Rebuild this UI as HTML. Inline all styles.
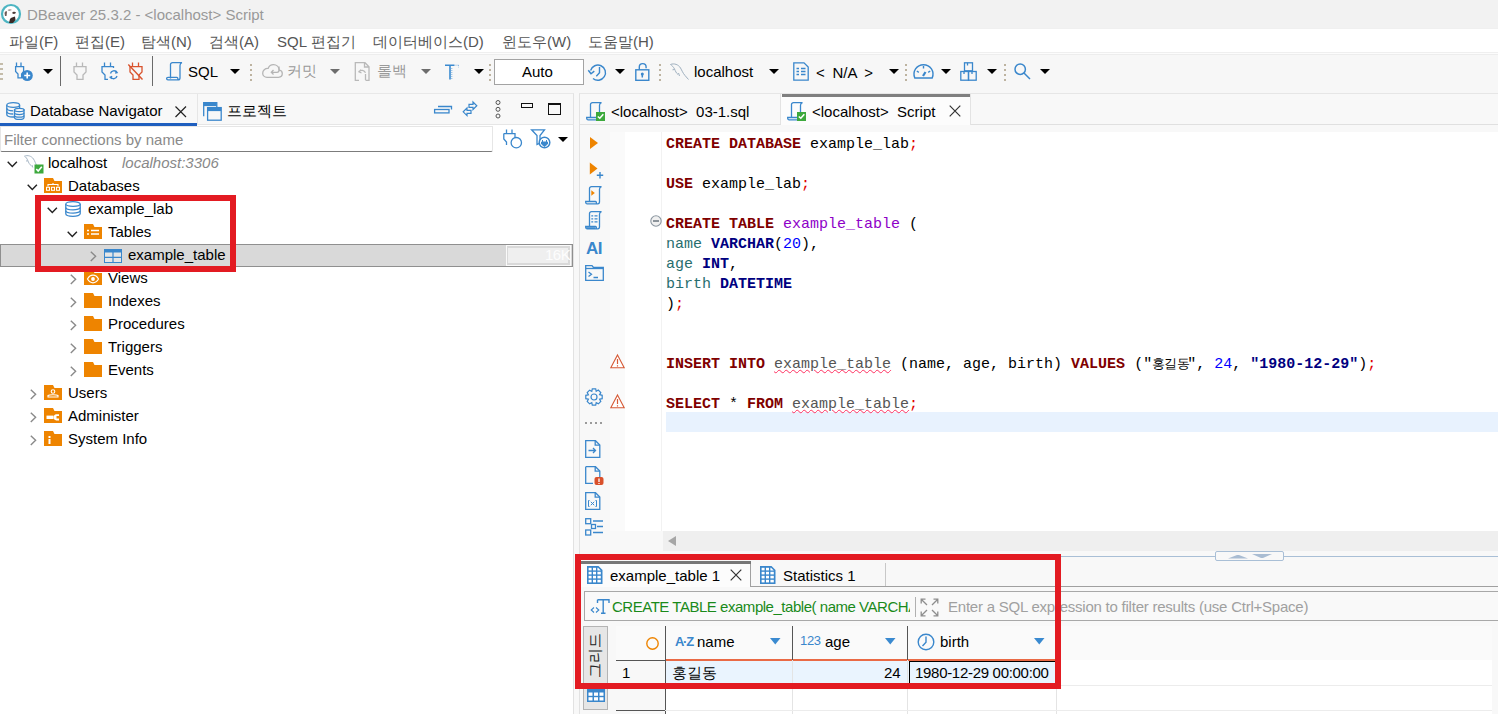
<!DOCTYPE html>
<html><head><meta charset="utf-8">
<style>
*{box-sizing:border-box;margin:0;padding:0}
html,body{width:1498px;height:714px;overflow:hidden;background:#fff}
body{position:relative;font-family:"Liberation Sans",sans-serif;font-size:15px;color:#000}
.a{position:absolute}
.t{position:absolute;white-space:pre;line-height:20px;font-size:15px}
.m{position:absolute;white-space:pre;line-height:20px;font-family:"Liberation Mono",monospace;font-size:15px}
svg{position:absolute;overflow:visible}
.kw{color:#7f0000;font-weight:bold}
.kb{color:#000080;font-weight:bold}
.sm{color:#e00000}
.id{color:#286e6e}
.num{color:#0000ff}
.tb{color:#8e00c8}
.ul{color:#555;text-decoration:underline wavy #ff3060;text-decoration-thickness:1px;text-underline-offset:1px}
.arr{position:absolute;width:0;height:0;border-left:5px solid transparent;border-right:5px solid transparent;border-top:5px solid #000}
.dsep{position:absolute;width:2px;height:26px;background:repeating-linear-gradient(#bdb3a0 0 2px,transparent 2px 5px)}
</style></head><body>

<!-- Title bar -->
<div class="a" style="left:0;top:0;width:1498px;height:29px;background:#f2f2f2;border-bottom:1px solid #f0f0f0"></div>
<div class="t" style="left:27px;top:5px;color:#999">DBeaver 25.3.2 - &lt;localhost&gt; Script</div>

<!-- Menu bar -->
<div class="a" style="left:0;top:29px;width:1498px;height:23px;background:#fff"></div>
<div class="t" style="left:9px;top:32px;color:#555">파일(F)</div>
<div class="t" style="left:75px;top:32px;color:#555">편집(E)</div>
<div class="t" style="left:141px;top:32px;color:#555">탐색(N)</div>
<div class="t" style="left:209px;top:32px;color:#555">검색(A)</div>
<div class="t" style="left:277px;top:32px;color:#555">SQL 편집기</div>
<div class="t" style="left:373px;top:32px;color:#555">데이터베이스(D)</div>
<div class="t" style="left:502px;top:32px;color:#555">윈도우(W)</div>
<div class="t" style="left:588px;top:32px;color:#555">도움말(H)</div>

<!-- Toolbar -->
<div class="a" style="left:0;top:52px;width:1498px;height:42px;background:#f7f7f7;border-bottom:1px solid #e3e3e3"></div><div class="a" style="left:0;top:52px;width:1498px;height:1px;background:#efefef"></div><div class="a" style="left:0;top:53px;width:1498px;height:1px;background:#fcfcfc"></div><div class="a" style="left:0;top:54px;width:1498px;height:1px;background:#ededed"></div>


<!-- ===== ICONS ===== -->
<!-- DBeaver logo -->
<svg style="left:0;top:3px" width="22" height="22" viewBox="0 0 22 22">
<circle cx="11" cy="11" r="9" fill="#fff" stroke="#4db5c2" stroke-width="2.2"/>
<path d="M9 20L10 16C11 14.5 13 14 15 13.5L15.5 17L13 20Z" fill="#3a2a26"/>
<path d="M12 10C13 8.5 15 8.5 16 9.5C15.5 11 13.5 11.5 12 10Z" fill="#4a3a36"/>
<path d="M4.5 10C5 8.5 6 8 7 8.5L6.5 13L5 13Z" fill="#6b5b57"/>
<path d="M7.5 7C9 6 11 6 12 7L9 8Z" fill="#9a8f8c"/>
</svg>

<!-- Toolbar -->
<div class="a" style="left:0;top:63px;width:3px;height:20px;background:repeating-linear-gradient(#c4bcaa 0 2px,transparent 2px 5px)"></div>
<svg style="left:15px;top:62px" width="20" height="20" viewBox="0 0 20 20" fill="none" stroke="#3a87cc" stroke-width="1.3">
<path d="M1.5 0.5V4.5M6 0.5V4.5M0.6 4.6H8.6V9.5L6.6 12V15.8H3V12L0.6 9.5Z"/>
<circle cx="12.2" cy="13.5" r="5.6" fill="#3a87cc" stroke="none"/>
<path d="M12.2 10.5V16.5M9.2 13.5H15.2" stroke="#fff" stroke-width="1.6"/>
</svg>
<div class="arr" style="left:43px;top:69px"></div>
<div class="a" style="left:60px;top:56px;width:1px;height:30px;background:#6a6a6a"></div>
<svg style="left:73px;top:62px" width="14" height="18" viewBox="0 0 14 18" fill="none" stroke="#b9b9b9" stroke-width="1.3">
<path d="M3.5 0.5V4.5M9.5 0.5V4.5M1 4.6H13V10L10 13V17.3H4V13L1 10Z"/>
</svg>
<svg style="left:101px;top:62px" width="17" height="18" viewBox="0 0 17 18" fill="none" stroke="#3a87cc" stroke-width="1.3">
<path d="M3.5 0.5V4.5M9.5 0.5V4.5M12.5 6V4.6H1V10L4 13V17.3H7"/>
<path d="M9.5 11.5a3.5 3.5 0 0 1 6.3-1.2M16 14a3.5 3.5 0 0 1-6.3 1.2"/>
<path d="M14.5 8.8l1.6 1.8l-2 .6M10.8 16.8l-1.6-1.6l2-.8"/>
</svg>
<svg style="left:128px;top:62px" width="15" height="18" viewBox="0 0 15 18" fill="none" stroke="#d9532d" stroke-width="1.3">
<path d="M4.5 0.5V4.5M10.5 0.5V4.5M2 4.6H14V10L11 13V17.3H5V13L2 10Z"/>
<path d="M0.3 2.5L14.5 17.5" stroke-width="1.4"/>
</svg>
<div class="a" style="left:152px;top:56px;width:1px;height:30px;background:#6a6a6a"></div>
<svg style="left:166px;top:62px" width="17" height="19" viewBox="0 0 17 19" fill="none" stroke="#3a87cc" stroke-width="1.3">
<path d="M4.5 16.5V2.5C4.5 1.3 5.3 0.7 6.5 0.7H16C14.8 1 14 2 14 3.5V16C14 17.3 13.3 17.9 12 17.9H2C1 17.9 0.6 17.2 0.6 16.6C0.6 16 1 15.4 2 15.4H10.8C11.8 15.4 12 16 12 17.8"/>
</svg>
<div class="t" style="left:188px;top:62px">SQL</div>
<div class="arr" style="left:230px;top:69px"></div>
<div class="dsep" style="left:250px;top:64px;height:18px"></div>
<svg style="left:262px;top:64px" width="21" height="14" viewBox="0 0 21 14" fill="none" stroke="#b5b5b5" stroke-width="1.3">
<path d="M5 13.3H16.5C18.8 13.3 20.3 11.7 20.3 9.6C20.3 7.8 19 6.4 17.3 6.2C17 3 14.6 0.7 11.5 0.7C9 0.7 7 2.2 6.2 4.4C3 4.2 0.7 6.5 0.7 9.2C0.7 11.6 2.6 13.3 5 13.3Z"/>
<path d="M17 2.5V6.5C17 7.5 16.5 8.3 15 8.3H9.5M11.5 6L9.3 8.3L11.5 10.5"/>
</svg>
<div class="t" style="left:287px;top:61px;color:#9a9a9a">커밋</div>
<div class="arr" style="left:330px;top:69px;border-top-color:#6d6d6d"></div>
<svg style="left:354px;top:62px" width="16" height="19" viewBox="0 0 16 19" fill="none" stroke="#b9b9b9" stroke-width="1.3">
<path d="M5 18.3H1.3V0.7H11L15 4.7V18.3H11.5M10.5 0.7V5H15M5 9.5a4 4 0 0 1 6.5 1.2M7 7.8L5 9.8L7.5 11"/>
<path d="M11.5 12V18"/>
</svg>
<div class="t" style="left:377px;top:61px;color:#9a9a9a">롤백</div>
<div class="arr" style="left:421px;top:69px;border-top-color:#6d6d6d"></div>
<svg style="left:445px;top:64px" width="15" height="16" viewBox="0 0 15 16">
<path d="M0 1.2H9.5M5 1.2V15.5" stroke="#3a8ad0" stroke-width="1.6" fill="none"/>
<path d="M10.5 1.2H14M13.5 1.2V3.5M6.8 4V15.5" stroke="#7fb2de" stroke-width="1" stroke-dasharray="1 1" fill="none"/>
</svg>
<div class="arr" style="left:474px;top:69px"></div>
<div class="dsep" style="left:489px;top:64px;height:18px"></div>
<div class="a" style="left:494px;top:59px;width:90px;height:26px;background:#fff;border:1px solid #a3a3a3"></div>
<div class="t" style="left:522px;top:62px">Auto</div>
<svg style="left:588px;top:63px" width="20" height="19" viewBox="0 0 20 19" fill="none" stroke="#3a87cc" stroke-width="1.4">
<path d="M2.6 7.5A7.6 7.6 0 1 1 5 15.5"/>
<path d="M0.3 7.3L3 10.8L6.3 8.2" stroke-width="1.5"/>
<path d="M11.5 4V9.8L8.3 13.2"/>
</svg>
<div class="arr" style="left:615px;top:69px"></div>
<svg style="left:635px;top:63px" width="15" height="18" viewBox="0 0 15 18" fill="none" stroke="#3a87cc" stroke-width="1.4">
<path d="M4.3 6.8V4A3.4 3.4 0 0 1 11.1 4V5.2"/>
<rect x="0.8" y="6.8" width="13" height="10.5"/>
<circle cx="7.3" cy="11" r="1.5" fill="#3a87cc" stroke="none"/><path d="M7.3 11V14.5" stroke-width="1.5"/>
</svg>
<div class="dsep" style="left:659px;top:64px;height:18px"></div>
<svg style="left:670px;top:63px" width="19" height="17" viewBox="0 0 19 17" fill="none" stroke="#9fb0bf" stroke-width="1">
<path d="M0.5 1.5C4 0 8.5 1.5 10.5 5C12 7.5 12.8 10 15 12.5L18.5 16.5M0.5 1.5C2 2.5 3.5 4 4.5 6C5.5 8 6 10 8 11.5M4.5 6.5L2.5 6.8M8.5 10L9.5 13"/>
</svg>
<div class="t" style="left:694px;top:62px">localhost</div>
<div class="arr" style="left:769px;top:69px"></div>
<svg style="left:793px;top:62px" width="16" height="19" viewBox="0 0 16 19" fill="none" stroke="#3a87cc" stroke-width="1.3">
<path d="M0.8 0.8H11L15.2 5V18.2H0.8Z"/>
<path d="M3.5 6.5H6M3.5 9.5H6M3.5 12.5H6M8 6.5H12.5M8 9.5H12.5M8 12.5H12.5" stroke-width="1.6"/>
</svg>
<div class="t" style="left:816px;top:63px;word-spacing:3.5px">&lt; N/A &gt;</div>
<div class="arr" style="left:889px;top:69px"></div>
<div class="dsep" style="left:905px;top:64px;height:18px"></div>
<svg style="left:913px;top:64px" width="21" height="15" viewBox="0 0 21 15" fill="none" stroke="#3a87cc" stroke-width="1.4">
<path d="M1.8 14A9.5 9.5 0 1 1 19.2 14Z"/>
<path d="M10.5 2V4.5M3.8 7L5.8 8.3M17.2 7L15.2 8.3"/>
<path d="M12.5 8L10 12" stroke-width="2.2"/>
</svg>
<div class="arr" style="left:941px;top:69px"></div>
<svg style="left:960px;top:62px" width="17" height="19" viewBox="0 0 17 19" fill="none" stroke="#3a87cc" stroke-width="1.3">
<rect x="4.5" y="0.8" width="8" height="8"/><rect x="0.8" y="9.5" width="7.7" height="8.7"/><rect x="8.5" y="9.5" width="7.7" height="8.7"/>
<path d="M7.5 0.8V3.5M4 9.5V12M12 9.5V12"/>
</svg>
<div class="arr" style="left:987px;top:69px"></div>
<div class="dsep" style="left:1004px;top:64px;height:18px"></div>
<svg style="left:1014px;top:63px" width="17" height="17" viewBox="0 0 17 17" fill="none" stroke="#3a87cc" stroke-width="1.5">
<circle cx="6.2" cy="6.2" r="5.2"/><path d="M10 10L16 16"/>
</svg>
<div class="arr" style="left:1040px;top:69px"></div>

<!-- Left panel -->
<div class="a" style="left:0;top:93px;width:574px;height:621px;background:#fff;border-right:1px solid #e2e2e2"></div>
<div class="a" style="left:0;top:93px;width:574px;height:32px;background:#f8f8f8;border-top:1px solid #e8e8e8;border-bottom:1px solid #e6e6e6;border-right:1px solid #e2e2e2"></div>
<div class="a" style="left:0;top:123px;width:197px;height:3px;background:#1f5fbf"></div>
<div class="a" style="left:197px;top:94px;width:1px;height:30px;background:#e6e6e6"></div>
<div class="t" style="left:30px;top:101px">Database Navigator</div>
<div class="t" style="left:227px;top:101px">프로젝트</div>

<!-- gap -->
<div class="a" style="left:574px;top:93px;width:5px;height:621px;background:#f8f8f8"></div>

<!-- Right panel -->
<div class="a" style="left:579px;top:93px;width:919px;height:621px;background:#f8f8f8;border-left:1px solid #e2e2e2;border-top:1px solid #e6e6e6"></div>


<!-- Filter connections -->
<div class="a" style="left:0;top:126px;width:493px;height:26px;background:#fff;border:1px solid #e6e6e6;border-bottom:1px solid #7c7c7c;border-radius:0 0 2px 2px"></div>
<div class="t" style="left:4px;top:130px;color:#8a8a8a">Filter connections by name</div>

<!-- Tree -->
<div class="a" style="left:0;top:244px;width:573px;height:23px;background:#d9d9d9;border:1px solid #8f8f8f"></div>
<div class="a" style="left:506px;top:245px;width:65px;height:21px;background:#fafafa"></div><div class="a" style="left:507px;top:246px;width:63px;height:19px;background:#efefef;border:2px solid #d9d9d9;border-left-width:1px"></div>
<div class="t" style="left:545px;top:245px;color:#fdfdfd;font-size:15px;letter-spacing:-0.5px">16K</div>
<div class="t" style="left:48px;top:153px">localhost</div>
<div class="t" style="left:122px;top:153px;color:#888;font-style:italic">localhost:3306</div>
<div class="t" style="left:68px;top:176px">Databases</div>
<div class="t" style="left:88px;top:199px">example_lab</div>
<div class="t" style="left:108px;top:222px">Tables</div>
<div class="t" style="left:128px;top:245px">example_table</div>
<div class="t" style="left:108px;top:268px">Views</div>
<div class="t" style="left:108px;top:291px">Indexes</div>
<div class="t" style="left:108px;top:314px">Procedures</div>
<div class="t" style="left:108px;top:337px">Triggers</div>
<div class="t" style="left:108px;top:360px">Events</div>
<div class="t" style="left:68px;top:383px">Users</div>
<div class="t" style="left:68px;top:406px">Administer</div>
<div class="t" style="left:68px;top:429px">System Info</div>

<!-- Editor tabs -->
<div class="a" style="left:580px;top:94px;width:918px;height:31px;background:#f8f8f8;border-bottom:1px solid #e0e0e0"></div>
<div class="a" style="left:780px;top:94px;width:1px;height:30px;background:#e3e3e3"></div>
<div class="a" style="left:781px;top:94px;width:190px;height:31px;background:#fcfcfc;border-right:1px solid #e3e3e3"></div>
<div class="a" style="left:782px;top:94px;width:188px;height:3px;background:#7f7f7f"></div>
<div class="t" style="left:611px;top:102px">&lt;localhost&gt;  03-1.sql</div>
<div class="t" style="left:812px;top:102px">&lt;localhost&gt;  Script</div>

<!-- Editor body -->
<div class="a" style="left:610px;top:132px;width:15px;height:399px;background:#fafafa"></div>
<div class="a" style="left:625px;top:132px;width:37px;height:399px;background:#fff"></div>
<div class="a" style="left:661px;top:132px;width:837px;height:399px;background:#fff;border-left:1px solid #f2f2f2"></div>
<div class="a" style="left:666px;top:412px;width:832px;height:20px;background:#e8f2fe"></div>
<div class="a" style="left:663px;top:531px;width:835px;height:20px;background:#efefef"></div>

<div class="m" style="left:666px;top:135px"><span class="kw">CREATE DATABASE</span> example_lab<span class="sm">;</span></div>
<div class="m" style="left:666px;top:175px"><span class="kw">USE</span> example_lab<span class="sm">;</span></div>
<div class="m" style="left:666px;top:215px"><span class="kw">CREATE TABLE</span> <span class="tb">example_table</span> (</div>
<div class="m" style="left:666px;top:235px"><span class="id">name</span> <span class="kb">VARCHAR</span>(<span class="num">20</span>),</div>
<div class="m" style="left:666px;top:255px"><span class="id">age</span> <span class="kb">INT</span>,</div>
<div class="m" style="left:666px;top:275px"><span class="id">birth</span> <span class="kb">DATETIME</span></div>
<div class="m" style="left:666px;top:295px">)<span class="sm">;</span></div>
<div class="m" style="left:666px;top:355px"><span class="kw">INSERT INTO</span> <span class="ul">example_table</span> (name, age, birth) <span class="kw">VALUES</span> ("<span style="display:inline-block;width:35px;font-size:13px;letter-spacing:-0.8px;vertical-align:top;line-height:20px">홍길동</span>", <span class="num">24</span>, <span class="kb">"1980-12-29"</span>)<span class="sm">;</span></div>
<div class="m" style="left:666px;top:395px"><span class="kw">SELECT</span> * <span class="kw">FROM</span> <span class="ul">example_table</span><span class="sm">;</span></div>


<!-- Editor tab icons -->
<svg style="left:586px;top:102px" width="20" height="20" viewBox="0 0 20 20"><path d="M4.5 15.5V2.5C4.5 1.3 5.3 0.7 6.5 0.7H15.5C14.5 1 13.5 1.8 13.5 3.2V14" fill="none" stroke="#3a87cc" stroke-width="1.3"/><path d="M0.7 15.5H10.5C11.3 15.5 11.5 16.2 11.5 17.8H2.2C1.2 17.8 0.7 17 0.7 16.3Z" fill="none" stroke="#3a87cc" stroke-width="1.3"/><rect x="10" y="10" width="9" height="9" fill="#3da93d"/><path d="M11.8 14.5L13.8 16.3L17.3 12.3" fill="none" stroke="#fff" stroke-width="1.5"/></svg>
<svg style="left:787px;top:102px" width="20" height="20" viewBox="0 0 20 20"><path d="M4.5 15.5V2.5C4.5 1.3 5.3 0.7 6.5 0.7H15.5C14.5 1 13.5 1.8 13.5 3.2V14" fill="none" stroke="#3a87cc" stroke-width="1.3"/><path d="M0.7 15.5H10.5C11.3 15.5 11.5 16.2 11.5 17.8H2.2C1.2 17.8 0.7 17 0.7 16.3Z" fill="none" stroke="#3a87cc" stroke-width="1.3"/><rect x="10" y="10" width="9" height="9" fill="#3da93d"/><path d="M11.8 14.5L13.8 16.3L17.3 12.3" fill="none" stroke="#fff" stroke-width="1.5"/></svg>
<svg style="left:949px;top:105px" width="12" height="12" viewBox="0 0 12 12"><path d="M0.7 0.7L11.3 11.3M11.3 0.7L0.7 11.3" stroke="#333" stroke-width="1.2"/></svg>

<!-- Gutter icons -->
<svg style="left:590px;top:137px" width="8" height="12" viewBox="0 0 8 12"><path d="M0 0L8 6L0 12Z" fill="#ee8400"/></svg>
<svg style="left:589px;top:162px" width="16" height="17" viewBox="0 0 16 17"><path d="M0.8 0.5L8.5 6.5L0.8 12.5Z" fill="#ee8400"/><path d="M11 10V16.5M7.8 13.3H14.2" stroke="#3a87cc" stroke-width="1.4"/></svg>
<svg style="left:585px;top:186px" width="18" height="19" viewBox="0 0 18 19"><path d="M4.5 15.5V2.5C4.5 1.3 5.3 0.7 6.5 0.7H16.5C15.5 1 14.5 1.8 14.5 3.2V15.8C14.5 17 14 17.8 12.8 17.8H2.2C1.2 17.8 0.7 17 0.7 16.3V15.5H10.5C11.3 15.5 11.5 16.2 11.5 17.8" fill="none" stroke="#3a87cc" stroke-width="1.3"/><path d="M6.3 4.2L9.8 7L6.3 9.8Z" fill="#ee8400"/></svg>
<svg style="left:585px;top:211px" width="18" height="19" viewBox="0 0 18 19"><path d="M4.5 15.5V2.5C4.5 1.3 5.3 0.7 6.5 0.7H16.5C15.5 1 14.5 1.8 14.5 3.2V15.8C14.5 17 14 17.8 12.8 17.8H2.2C1.2 17.8 0.7 17 0.7 16.3V15.5H10.5C11.3 15.5 11.5 16.2 11.5 17.8" fill="none" stroke="#3a87cc" stroke-width="1.3"/><path d="M0.7 16.2H10.5V18H2Z" fill="#3a87cc"/><path d="M6.3 4.8H8.2M9.5 4.8H12.5M6.3 7.8H8.2M9.5 7.8H12.5M6.3 10.8H8.2M9.5 10.8H12.5" stroke="#3a87cc" stroke-width="1.3"/></svg>
<div class="a" style="left:586px;top:239px;font-family:'Liberation Sans',sans-serif;font-weight:bold;font-size:17px;line-height:20px;color:#3a87cc;letter-spacing:-0.5px">AI</div>
<svg style="left:585px;top:265px" width="19" height="16" viewBox="0 0 19 16" fill="none" stroke="#3a87cc" stroke-width="1.3"><path d="M0.7 15.3V0.7H7L8.5 2.5H18.3V15.3Z"/><path d="M0.7 3.5H18.3"/><path d="M3.5 7L6.5 9.3L3.5 11.6M8.5 12.5H13"/></svg>
<svg style="left:650px;top:215px" width="12" height="12" viewBox="0 0 12 12"><circle cx="6" cy="6" r="5.2" fill="#f0f0f0" stroke="#8b96a0" stroke-width="1.1"/><path d="M3 6H9" stroke="#5f6b75" stroke-width="1.4"/></svg>
<svg style="left:610px;top:354px" width="15" height="15" viewBox="0 0 15 15"><path d="M7.5 1L14.2 13.8H0.8Z" fill="#fff" stroke="#d65a36" stroke-width="1.1"/><path d="M7.5 5V10M7.5 11.2V12.5" stroke="#d65a36" stroke-width="1.2"/></svg>
<svg style="left:610px;top:394px" width="15" height="15" viewBox="0 0 15 15"><path d="M7.5 1L14.2 13.8H0.8Z" fill="#fff" stroke="#d65a36" stroke-width="1.1"/><path d="M7.5 5V10M7.5 11.2V12.5" stroke="#d65a36" stroke-width="1.2"/></svg>
<svg style="left:585px;top:388px" width="18" height="18" viewBox="0 0 18 18"><path d="M7.3 0.8H10.7L11.2 3.3L13.3 2.1L15.8 4.6L14.6 6.7L17.2 7.3V10.7L14.6 11.2L15.8 13.4L13.4 15.8L11.2 14.6L10.7 17.2H7.3L6.8 14.6L4.6 15.8L2.2 13.4L3.4 11.2L0.8 10.7V7.3L3.4 6.8L2.2 4.6L4.6 2.2L6.8 3.4Z" fill="none" stroke="#3a87cc" stroke-width="1.2"/><circle cx="9" cy="9" r="3" fill="none" stroke="#3a87cc" stroke-width="1.2"/></svg>
<div class="a" style="left:585px;top:422px;width:19px;height:2px;background:repeating-linear-gradient(90deg,#9a9a9a 0 2px,transparent 2px 5px)"></div>
<svg style="left:585px;top:440px" width="17" height="18" viewBox="0 0 17 18" fill="none" stroke="#3a87cc" stroke-width="1.3"><path d="M0.7 0.7H10.5L14.8 5V17.3H0.7Z"/><path d="M10.2 0.7V5.2H14.8"/><path d="M3.5 10.5H10.5M8 8L10.5 10.5L8 13"/></svg>
<svg style="left:585px;top:466px" width="19" height="19" viewBox="0 0 19 19"><path d="M0.7 0.7H10.5L14.8 5V11M8 17.3H0.7V0.7" fill="none" stroke="#3a87cc" stroke-width="1.3"/><path d="M10.2 0.7V5.2H14.8" fill="none" stroke="#3a87cc" stroke-width="1.3"/><rect x="9.5" y="11" width="9" height="8" rx="2" fill="#d9502b"/><path d="M14 12.5V16M14 17V18" stroke="#fff" stroke-width="1.3"/></svg>
<svg style="left:585px;top:492px" width="17" height="18" viewBox="0 0 17 18" fill="none" stroke="#3a87cc" stroke-width="1.3"><path d="M0.7 0.7H10.5L14.8 5V17.3H0.7Z"/><path d="M10.2 0.7V5.2H14.8"/><path d="M4.5 8.5H3.5V14.5H4.5M10.5 8.5H11.5V14.5H10.5M5.8 9.8L9.2 13.2M9.2 9.8L5.8 13.2" stroke-width="1"/></svg>
<svg style="left:585px;top:518px" width="19" height="18" viewBox="0 0 19 18" fill="none" stroke="#3a87cc" stroke-width="1.3"><rect x="0.7" y="0.7" width="5" height="5"/><rect x="0.7" y="12" width="5" height="5"/><rect x="6.5" y="6.5" width="4" height="4"/><path d="M8 3H18M12 8.5H18M8 14.5H18"/></svg>
<svg style="left:668px;top:536px" width="8" height="10" viewBox="0 0 8 10"><path d="M8 0L0 5L8 10Z" fill="#a6a6a6"/></svg>

<!-- Sash -->
<div class="a" style="left:580px;top:551px;width:918px;height:10px;background:#f8f8f8"></div>
<div class="a" style="left:580px;top:556px;width:918px;height:1px;background:#a9bfd6"></div>
<div class="a" style="left:1215px;top:551px;width:69px;height:10px;background:#f8f8f8;border:1px solid #a9bfd6;border-radius:2px"></div><svg style="left:1227px;top:553px" width="46" height="6" viewBox="0 0 46 6"><path d="M1 5.5L10 2H12L21 5.5Z" fill="#a9bcd2"/><path d="M25 1H45L36 5H34Z" fill="#a9bcd2"/></svg>

<!-- Results -->
<div class="a" style="left:580px;top:561px;width:918px;height:153px;background:#f8f8f8"></div>
<div class="a" style="left:580px;top:586px;width:918px;height:1px;background:#a0a0a0"></div>
<div class="a" style="left:581px;top:561px;width:170px;height:26px;background:#fcfcfc;border-right:1px solid #a0a0a0"></div>
<div class="a" style="left:581px;top:561px;width:170px;height:3px;background:#777"></div>
<div class="a" style="left:885px;top:563px;width:1px;height:23px;background:#c8c8c8"></div>
<div class="t" style="left:610px;top:566px">example_table 1</div>
<div class="t" style="left:783px;top:566px">Statistics 1</div>

<div class="a" style="left:584px;top:591px;width:914px;height:30px;background:#f9f9f9;border:1px solid #a8a8a8;border-right:none"></div>
<div class="a" style="left:612px;top:592px;width:298px;height:28px;overflow:hidden"><div class="t" style="left:0;top:5px;color:#1a8a1a;letter-spacing:-0.47px">CREATE TABLE example_table( name VARCHAR(20),</div></div>
<div class="a" style="left:915px;top:597px;width:1px;height:20px;background:#b0b0b0"></div>
<div class="t" style="left:948px;top:597px;color:#a0a0a0;letter-spacing:-0.23px">Enter a SQL expression to filter results (use Ctrl+Space)</div>

<!-- Grid -->
<div class="a" style="left:583px;top:626px;width:25px;height:84px;background:#e6e6e6;border:1px solid #b4b4b4"></div>
<div class="a" style="left:616px;top:626px;width:876px;height:88px;background:#fff"></div>
<div class="a" style="left:616px;top:626px;width:876px;height:34px;background:#fafafa"></div>
<div class="a" style="left:616px;top:660px;width:49px;height:54px;background:#f8f8f8"></div><div class="a" style="left:616px;top:660px;width:49px;height:1px;background:#555"></div>
<div class="a" style="left:666px;top:659px;width:126px;height:2px;background:#ea6a45"></div><div class="a" style="left:793px;top:659px;width:114px;height:2px;background:#ea6a45"></div><div class="a" style="left:908px;top:659px;width:148px;height:2px;background:#ea6a45"></div>
<div class="a" style="left:665px;top:661px;width:391px;height:24px;background:#eaf4fe"></div>
<div class="a" style="left:665px;top:626px;width:1px;height:88px;background:#555"></div>
<div class="a" style="left:792px;top:626px;width:1px;height:88px;background:#e4e4e4"></div>
<div class="a" style="left:792px;top:626px;width:1px;height:34px;background:#555"></div>
<div class="a" style="left:907px;top:626px;width:1px;height:88px;background:#e4e4e4"></div>
<div class="a" style="left:907px;top:626px;width:1px;height:34px;background:#555"></div>
<div class="a" style="left:1056px;top:626px;width:1px;height:88px;background:#e4e4e4"></div>
<div class="a" style="left:616px;top:685px;width:876px;height:1px;background:#ececec"></div>
<div class="a" style="left:616px;top:710px;width:876px;height:1px;background:#ececec"></div>
<div class="a" style="left:616px;top:710px;width:49px;height:1px;background:#555"></div>
<div class="a" style="left:909px;top:661px;width:147px;height:24px;border:1px solid #000;background:#eaf4fe"></div>
<div class="t" style="left:697px;top:632px">name</div>
<div class="t" style="left:825px;top:632px">age</div>
<div class="t" style="left:940px;top:632px">birth</div>
<div class="t" style="left:622px;top:663px">1</div>
<div class="t" style="left:672px;top:663px">홍길동</div>
<div class="t" style="left:884px;top:663px">24</div>
<div class="t" style="left:915px;top:663px;letter-spacing:-0.3px">1980-12-29 00:00:00</div>


<!-- Left tab icons -->
<svg style="left:6px;top:102px" width="19" height="18" viewBox="0 0 19 18" fill="#f8f8f8" stroke="#3a87cc" stroke-width="1.3">
<path d="M0.8 3V12.5C0.8 14 3.8 15 7.2 15S13.6 14 13.6 12.5V3"/>
<ellipse cx="7.2" cy="3" rx="6.4" ry="2.3"/>
<path d="M0.8 6.3C0.8 7.8 3.8 8.8 7.2 8.8M0.8 9.5C0.8 11 3.8 12 7.2 12" fill="none"/>
<path d="M8.5 8V15.5C8.5 16.8 10.5 17.4 13.3 17.4S18 16.8 18 15.5V8Z"/>
<ellipse cx="13.3" cy="8" rx="4.7" ry="1.6"/>
<path d="M8.5 10.8C8.5 12 10.5 12.6 13.3 12.6S18 12 18 10.8M8.5 13.4C8.5 14.6 10.5 15.2 13.3 15.2S18 14.6 18 13.4" fill="none"/>
</svg>
<svg style="left:175px;top:106px" width="12" height="12" viewBox="0 0 12 12"><path d="M0.5 0.5L11 11M11 0.5L0.5 11" stroke="#222" stroke-width="1.2"/></svg>
<svg style="left:203px;top:102px" width="19" height="19" viewBox="0 0 19 19" fill="none" stroke="#3a87cc" stroke-width="1.3">
<path d="M0.7 14.3V0.7H13.8V5"/><path d="M0.7 2.4H13.8" stroke-width="3.4"/>
<rect x="4.6" y="5.6" width="13.6" height="12.6"/><path d="M4.6 7.4H18.2" stroke-width="3.4"/>
</svg>
<!-- view controls -->
<svg style="left:433px;top:105px" width="20" height="9" viewBox="0 0 20 9" fill="none" stroke="#3a87cc" stroke-width="1.3">
<path d="M5 1.5H18.5V4.5"/><rect x="1.6" y="4.5" width="14.4" height="3.4"/>
</svg>
<svg style="left:462px;top:101px" width="16" height="16" viewBox="0 0 16 16" fill="none" stroke="#3a87cc" stroke-width="1.2" stroke-linejoin="miter">
<path d="M7 3.3H11V1L14.8 4.8L11 8.5V6.3H7Z"/>
<path d="M9 9.3H5V7L1.2 10.8L5 14.6V12.4H9Z"/>
</svg>
<svg style="left:494px;top:100px" width="8" height="19" viewBox="0 0 8 19" fill="none" stroke="#555" stroke-width="1">
<circle cx="4" cy="2.5" r="2"/><circle cx="4" cy="9.3" r="2"/><circle cx="4" cy="16" r="2"/>
</svg>
<div class="a" style="left:521px;top:103px;width:12px;height:5px;border:1.5px solid #111"></div>
<div class="a" style="left:548px;top:103px;width:13px;height:12px;border:1.5px solid #111;border-top-width:2px"></div>
<!-- filter row icons -->
<svg style="left:503px;top:129px" width="20" height="20" viewBox="0 0 20 20" fill="none" stroke="#3a87cc" stroke-width="1.3">
<path d="M3.5 0.5V4.5M9 0.5V4.5M0.8 4.6H12V9M0.8 4.6V10L3.5 13V16"/>
<circle cx="13.3" cy="13.7" r="5.2" fill="#fff"/>
</svg>
<svg style="left:531px;top:129px" width="20" height="20" viewBox="0 0 20 20" fill="none" stroke="#3a87cc" stroke-width="1.3">
<path d="M0.6 0.8H13.5L9 6.5V14L6 15.5V6.5Z"/>
<circle cx="13.5" cy="13.5" r="5.3" fill="#fff" stroke-width="1.5"/>
<path d="M11.5 11V13M15.5 11V13M10.5 13H16.5V15L13.5 17.5L10.5 15Z" stroke-width="1" fill="#3a87cc"/>
</svg>
<div class="arr" style="left:558px;top:137px"></div>

<!-- Tree icons -->
<svg style="left:7px;top:161px" width="11" height="7" viewBox="0 0 11 7"><path d="M0.7 0.8L5.3 5.6L9.9 0.8" fill="none" stroke="#222" stroke-width="1.4"/></svg>
<svg style="left:24px;top:155px" width="20" height="19" viewBox="0 0 20 19" fill="none" stroke="#a7b7c6" stroke-width="1">
<path d="M0.5 1.2C3.5 -0.2 7.5 1 9.5 4C11 6.3 11.5 8.5 12.5 10M0.5 1.2C2 2.2 3 3.5 3.8 5.5C4.5 7.5 5.5 9.5 7.5 11M3.8 5.8L2 6M8 10L8.8 12.5"/>
<rect x="10.5" y="9.5" width="9" height="9" fill="#3da93d" stroke="none"/>
<path d="M12.3 14L14.2 16L17.8 11.8" stroke="#fff" stroke-width="1.6"/>
</svg>
<svg style="left:27px;top:184px" width="11" height="7" viewBox="0 0 11 7"><path d="M0.7 0.8L5.3 5.6L9.9 0.8" fill="none" stroke="#222" stroke-width="1.4"/></svg>
<svg style="left:44px;top:178px" width="18" height="15" viewBox="0 0 18 15"><path d="M0 0H9L10.5 3H18V15H0Z" fill="#ee8400"/><path d="M4 8.5V6.5H14V8.5M9 5V6.5" stroke="#fff" stroke-width="1.1" fill="none"/><rect x="2.5" y="9.3" width="3" height="3" fill="none" stroke="#fff" stroke-width="1"/><rect x="7.5" y="9.3" width="3" height="3" fill="none" stroke="#fff" stroke-width="1"/><rect x="12.5" y="9.3" width="3" height="3" fill="none" stroke="#fff" stroke-width="1"/></svg>
<svg style="left:47px;top:207px" width="11" height="7" viewBox="0 0 11 7"><path d="M0.7 0.8L5.3 5.6L9.9 0.8" fill="none" stroke="#222" stroke-width="1.4"/></svg>
<svg style="left:65px;top:201px" width="16" height="16" viewBox="0 0 16 16" fill="#fff" stroke="#3a87cc" stroke-width="1.3">
<path d="M0.8 3V12.8C0.8 14.2 4 15.3 8 15.3S15.2 14.2 15.2 12.8V3"/>
<ellipse cx="8" cy="3" rx="7.2" ry="2.3"/>
<path d="M0.8 6.4C0.8 7.8 4 8.8 8 8.8S15.2 7.8 15.2 6.4M0.8 9.7C0.8 11.1 4 12.1 8 12.1S15.2 11.1 15.2 9.7" fill="none"/>
</svg>
<svg style="left:67px;top:231px" width="11" height="7" viewBox="0 0 11 7"><path d="M0.7 0.8L5.3 5.6L9.9 0.8" fill="none" stroke="#222" stroke-width="1.4"/></svg>
<svg style="left:84px;top:224px" width="18" height="15" viewBox="0 0 18 15"><path d="M0 0H9L10.5 3H18V15H0Z" fill="#ee8400"/><path d="M3 6.5H5M3 10H5M7 6.5H15M7 10H15" stroke="#fff" stroke-width="1.6"/></svg>
<svg style="left:90px;top:251px" width="7" height="11" viewBox="0 0 7 11"><path d="M0.8 0.7L5.6 5.3L0.8 9.9" fill="none" stroke="#8a8a8a" stroke-width="1.4"/></svg>
<svg style="left:104px;top:249px" width="18" height="14" viewBox="0 0 18 14">
<rect x="0.5" y="0.5" width="17" height="13" fill="#e6e6e6" stroke="#3a87cc" stroke-width="1"/>
<rect x="0" y="0" width="18" height="3.5" fill="#3a87cc"/>
<path d="M9 3V14M0 8.3H18" stroke="#3a87cc" stroke-width="1.2"/>
</svg>
<svg style="left:70px;top:274px" width="7" height="11" viewBox="0 0 7 11"><path d="M0.8 0.7L5.6 5.3L0.8 9.9" fill="none" stroke="#8a8a8a" stroke-width="1.4"/></svg>
<svg style="left:84px;top:270px" width="18" height="15" viewBox="0 0 18 15"><path d="M0 0H9L10.5 3H18V15H0Z" fill="#ee8400"/><path d="M3.5 9C5 6.3 7 5.2 9 5.2S13 6.3 14.5 9C13 11.7 11 12.8 9 12.8S5 11.7 3.5 9Z" fill="none" stroke="#fff" stroke-width="1.2"/><circle cx="9" cy="9" r="1.9" fill="#fff"/></svg>
<svg style="left:70px;top:297px" width="7" height="11" viewBox="0 0 7 11"><path d="M0.8 0.7L5.6 5.3L0.8 9.9" fill="none" stroke="#8a8a8a" stroke-width="1.4"/></svg>
<svg style="left:84px;top:293px" width="18" height="15" viewBox="0 0 18 15"><path d="M0 0H9L10.5 3H18V15H0Z" fill="#ee8400"/></svg>
<svg style="left:70px;top:320px" width="7" height="11" viewBox="0 0 7 11"><path d="M0.8 0.7L5.6 5.3L0.8 9.9" fill="none" stroke="#8a8a8a" stroke-width="1.4"/></svg>
<svg style="left:84px;top:316px" width="18" height="15" viewBox="0 0 18 15"><path d="M0 0H9L10.5 3H18V15H0Z" fill="#ee8400"/></svg>
<svg style="left:70px;top:343px" width="7" height="11" viewBox="0 0 7 11"><path d="M0.8 0.7L5.6 5.3L0.8 9.9" fill="none" stroke="#8a8a8a" stroke-width="1.4"/></svg>
<svg style="left:84px;top:339px" width="18" height="15" viewBox="0 0 18 15"><path d="M0 0H9L10.5 3H18V15H0Z" fill="#ee8400"/></svg>
<svg style="left:70px;top:366px" width="7" height="11" viewBox="0 0 7 11"><path d="M0.8 0.7L5.6 5.3L0.8 9.9" fill="none" stroke="#8a8a8a" stroke-width="1.4"/></svg>
<svg style="left:84px;top:362px" width="18" height="15" viewBox="0 0 18 15"><path d="M0 0H9L10.5 3H18V15H0Z" fill="#ee8400"/></svg>
<svg style="left:30px;top:389px" width="7" height="11" viewBox="0 0 7 11"><path d="M0.8 0.7L5.6 5.3L0.8 9.9" fill="none" stroke="#8a8a8a" stroke-width="1.4"/></svg>
<svg style="left:44px;top:385px" width="18" height="15" viewBox="0 0 18 15"><path d="M0 0H9L10.5 3H18V15H0Z" fill="#ee8400"/><circle cx="9" cy="6.5" r="1.8" fill="none" stroke="#fff" stroke-width="1.1"/><path d="M4 12H14V10.5C12.5 9.5 5.5 9.5 4 10.5Z" fill="none" stroke="#fff" stroke-width="1.1"/></svg>
<svg style="left:30px;top:412px" width="7" height="11" viewBox="0 0 7 11"><path d="M0.8 0.7L5.6 5.3L0.8 9.9" fill="none" stroke="#8a8a8a" stroke-width="1.4"/></svg>
<svg style="left:44px;top:408px" width="18" height="15" viewBox="0 0 18 15"><path d="M0 0H9L10.5 3H18V15H0Z" fill="#ee8400"/><rect x="2.5" y="7.6" width="7" height="3.4" fill="#fff"/><path d="M15 6.2H12.2C10.8 6.2 9.5 7.6 9.5 9.3S10.8 12.4 12.2 12.4H15V10.5H12.5V8.1H15Z" fill="#fff"/></svg>
<svg style="left:30px;top:435px" width="7" height="11" viewBox="0 0 7 11"><path d="M0.8 0.7L5.6 5.3L0.8 9.9" fill="none" stroke="#8a8a8a" stroke-width="1.4"/></svg>
<svg style="left:44px;top:431px" width="18" height="15" viewBox="0 0 18 15"><path d="M0 0H9L10.5 3H18V15H0Z" fill="#ee8400"/><rect x="4.5" y="5" width="2" height="2" fill="#fff"/><rect x="4.5" y="8" width="2" height="5" fill="#fff"/></svg>


<!-- Results icons -->
<svg style="left:587px;top:566px" width="16" height="18" viewBox="0 0 16 18"><path d="M0 0H11.5L15.5 4V18H0Z" fill="#3a87cc"/><g fill="#fff"><rect x="1.6" y="1.8" width="3" height="2.6"/><rect x="6" y="1.8" width="3" height="2.6"/><rect x="1.6" y="5.8" width="3" height="2.6"/><rect x="6" y="5.8" width="3" height="2.6"/><rect x="10.4" y="5.8" width="3.4" height="2.6"/><rect x="1.6" y="9.8" width="3" height="2.6"/><rect x="6" y="9.8" width="3" height="2.6"/><rect x="10.4" y="9.8" width="3.4" height="2.6"/><rect x="1.6" y="13.8" width="3" height="2.6"/><rect x="6" y="13.8" width="3" height="2.6"/><rect x="10.4" y="13.8" width="3.4" height="2.6"/><path d="M10.4 1.8H11L13.8 4.6V4.4H10.4Z"/></g></svg>
<svg style="left:730px;top:569px" width="12" height="12" viewBox="0 0 12 12"><path d="M0.7 0.7L11.3 11.3M11.3 0.7L0.7 11.3" stroke="#333" stroke-width="1.2"/></svg>
<svg style="left:760px;top:566px" width="16" height="18" viewBox="0 0 16 18"><path d="M0 0H11.5L15.5 4V18H0Z" fill="#3a87cc"/><g fill="#fff"><rect x="1.6" y="1.8" width="3" height="2.6"/><rect x="6" y="1.8" width="3" height="2.6"/><rect x="1.6" y="5.8" width="3" height="2.6"/><rect x="6" y="5.8" width="3" height="2.6"/><rect x="10.4" y="5.8" width="3.4" height="2.6"/><rect x="1.6" y="9.8" width="3" height="2.6"/><rect x="6" y="9.8" width="3" height="2.6"/><rect x="10.4" y="9.8" width="3.4" height="2.6"/><rect x="1.6" y="13.8" width="3" height="2.6"/><rect x="6" y="13.8" width="3" height="2.6"/><rect x="10.4" y="13.8" width="3.4" height="2.6"/><path d="M10.4 1.8H11L13.8 4.6V4.4H10.4Z"/></g></svg>
<svg style="left:590px;top:599px" width="20" height="15" viewBox="0 0 20 15" fill="none" stroke="#3a87cc">
<path d="M4 8.5L1.2 11L4 13.5M6 8.5L8.8 11L6 13.5" stroke-width="1.1"/>
<path d="M7.5 0.8H19V4M13.2 0.8V14.2M11 14.2H15.5M7.5 0.8V4" stroke-width="1.4"/>
</svg>
<svg style="left:920px;top:598px" width="19" height="19" viewBox="0 0 19 19" fill="none" stroke="#8e8e8e" stroke-width="1.2">
<path d="M1.2 5.5V1.2H5.5M1.2 1.2L7 7M13.5 1.2H17.8V5.5M17.8 1.2L12 7M1.2 13.5V17.8H5.5M1.2 17.8L7 12M17.8 13.5V17.8H13.5M17.8 17.8L12 12" stroke-width="1.3"/>
</svg>
<svg style="left:646px;top:637px" width="13" height="13" viewBox="0 0 13 13"><circle cx="6.5" cy="6.5" r="5.7" fill="none" stroke="#ee8400" stroke-width="1.4"/></svg>
<div class="a" style="left:675px;top:634px;line-height:16px;font-size:13px;font-weight:bold;color:#3a87cc;letter-spacing:-0.3px">A<span style="font-size:13px;position:relative;top:0px;margin:0 -1px">·</span>Z</div>
<div class="a" style="left:800px;top:633px;line-height:16px;font-size:13px;color:#3a87cc;letter-spacing:-0.3px">123</div>
<svg style="left:917px;top:633px" width="18" height="18" viewBox="0 0 18 18" fill="none" stroke="#3a87cc" stroke-width="1.4"><circle cx="9" cy="9" r="7.8"/><path d="M9 3.5V9.3L5.5 13"/></svg>
<svg style="left:770px;top:638px" width="11" height="7" viewBox="0 0 11 7"><path d="M0 0H10.5L5.25 6.5Z" fill="#3a8ad0"/></svg>
<svg style="left:885px;top:638px" width="11" height="7" viewBox="0 0 11 7"><path d="M0 0H10.5L5.25 6.5Z" fill="#3a8ad0"/></svg>
<svg style="left:1034px;top:638px" width="11" height="7" viewBox="0 0 11 7"><path d="M0 0H10.5L5.25 6.5Z" fill="#3a8ad0"/></svg>
<div class="a" style="left:572px;top:645px;width:46px;height:20px;font-size:15px;line-height:20px;color:#222;text-align:center;transform:rotate(-90deg)">그리드</div>
<svg style="left:587px;top:689px" width="18" height="13" viewBox="0 0 18 13"><rect width="18" height="13" fill="#3a87cc"/><g fill="#fff"><rect x="1.5" y="3.5" width="4" height="3.3"/><rect x="7" y="3.5" width="4" height="3.3"/><rect x="12.5" y="3.5" width="4" height="3.3"/><rect x="1.5" y="8.2" width="4" height="3.3"/><rect x="7" y="8.2" width="4" height="3.3"/><rect x="12.5" y="8.2" width="4" height="3.3"/></g></svg>

<!-- Red boxes -->
<div class="a" style="left:35px;top:195px;width:201px;height:77px;border:6px solid #e31b22"></div>
<div class="a" style="left:575px;top:554px;width:486px;height:135px;border:6px solid #e31b22"></div>

</body></html>
